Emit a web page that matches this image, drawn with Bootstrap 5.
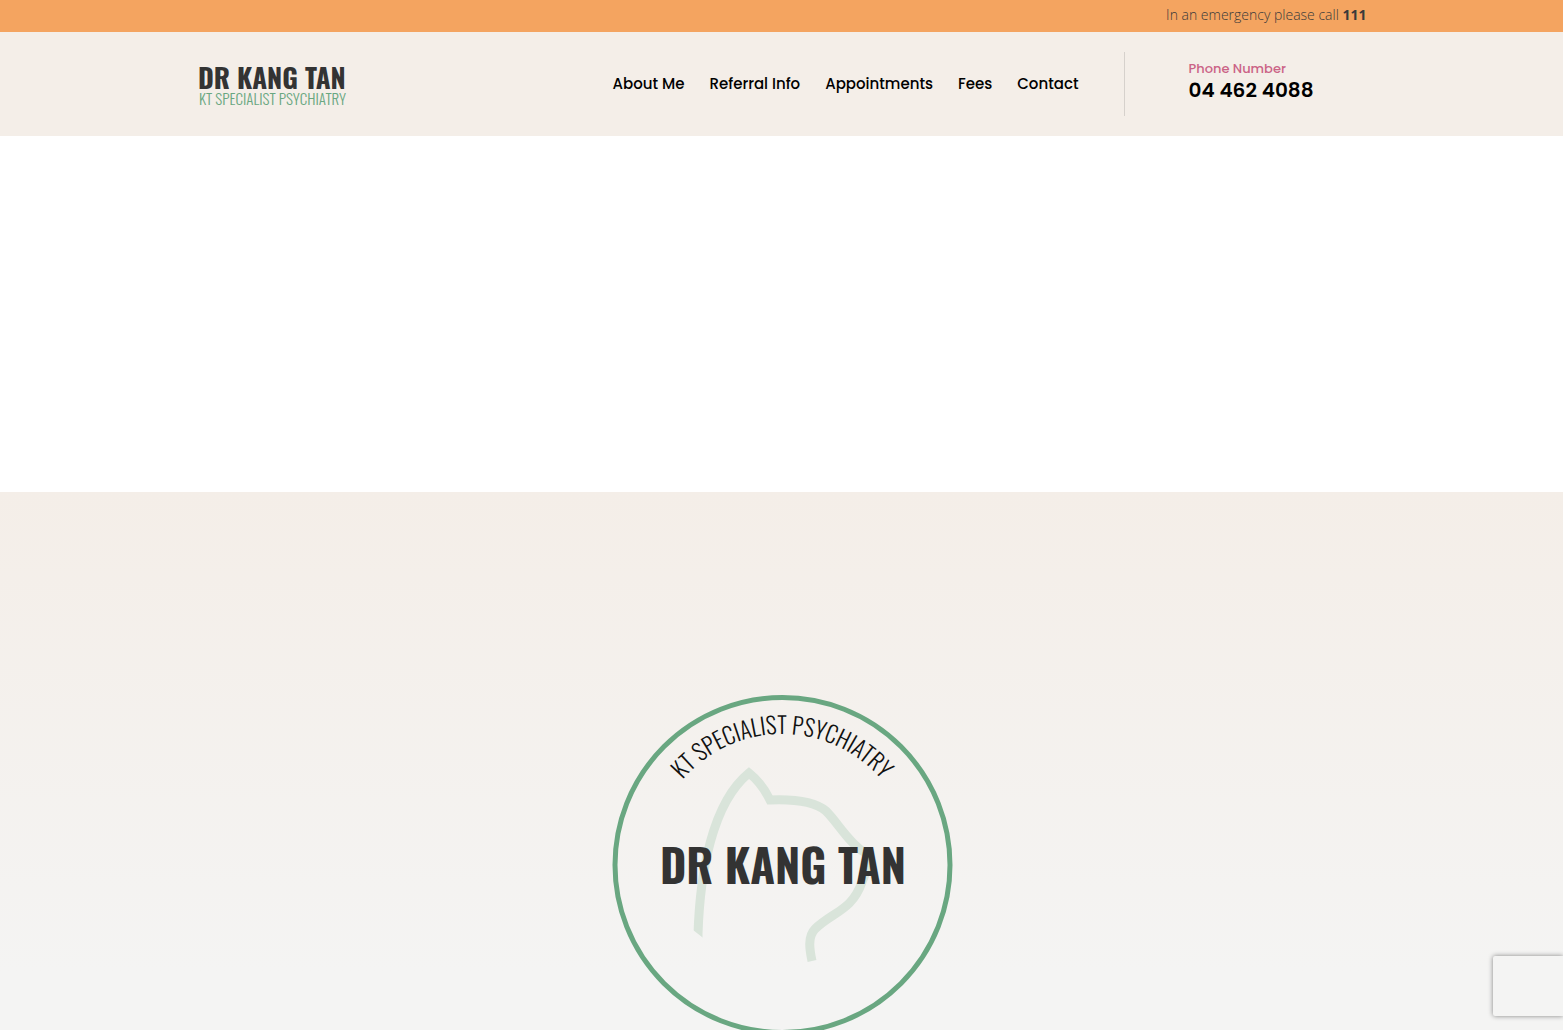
<!DOCTYPE html>
<html lang="en">
<head>
<meta charset="utf-8">
<meta name="viewport" content="width=device-width, initial-scale=1">
<title>Dr Kang Tan | KT Specialist Psychiatry</title>
<link href="https://cdn.jsdelivr.net/npm/bootstrap@5.3.0/dist/css/bootstrap.min.css" rel="stylesheet">
<style>
  body { font-family: "Open Sans", "Noto Sans", sans-serif; color: #3a3a3a; }
  .site-width { max-width: 1170px; }
  .alert-strip { background: #f4a460; height: 32px; font-size: 14px; line-height: 30px; font-weight: 300; }
  .site-header { background: #f4eee8; padding: 20px 0; font-family: Poppins, Inter, "Open Sans", sans-serif; }
  .main-nav { gap: 25px; font-size: 15px; font-weight: 500; padding-right: 45px; }
  .main-nav .nav-link { padding: 0; color: #000; line-height: 24px; }
  .phone-box { border-left: 1px solid #d6d1cc; width: 243px; min-height: 64px; padding-left: 64px; padding-top: 6px; }
  .phone-label { color: #cb6386; font-size: 13px; line-height: 22px; font-weight: 500; }
  .phone-link { color: #000; font-size: 20px; line-height: 20px; font-weight: 600; }
  .intro-space { height: 356px; }
  .hero { background: linear-gradient(#f4eee8, #f4f4f3 480px); padding-top: 200px; }
  .emblem { width: 346px; height: 346px; }
  .logo-face { font-family: Oswald, "Roboto Condensed", Roboto, sans-serif; }
  .captcha-tab { right: 0; bottom: 14px; width: 70px; height: 60px; background: #f4f4f3; border-radius: 2px 0 0 2px; box-shadow: 0 0 5px #808080; }
</style>
<script src="https://cdn.jsdelivr.net/npm/bootstrap@5.3.0/dist/js/bootstrap.bundle.min.js"></script>
</head>
<body>
<div class="vh-100 overflow-hidden d-flex flex-column">
  <div class="alert-strip flex-shrink-0">
    <div class="container-fluid site-width p-0 text-end">In an emergency please call <strong class="fw-bold">111</strong></div>
  </div>
  <header class="site-header flex-shrink-0">
    <div class="container-fluid site-width p-0 d-flex align-items-center">
      <a href="#" aria-label="Dr Kang Tan home" class="me-auto">
        <svg class="d-block logo-face" width="160" height="64" viewBox="0 0 160 64">
          <text x="1" y="37" font-size="27" font-weight="700" fill="#333">DR KANG TAN</text>
          <text x="2" y="53" font-size="15" font-weight="300" fill="#69a781">KT SPECIALIST PSYCHIATRY</text>
        </svg>
      </a>
      <nav class="nav main-nav" aria-label="Main">
        <a class="nav-link" href="#">About Me</a>
        <a class="nav-link" href="#">Referral Info</a>
        <a class="nav-link" href="#">Appointments</a>
        <a class="nav-link" href="#">Fees</a>
        <a class="nav-link" href="#">Contact</a>
      </nav>
      <div class="phone-box d-flex flex-column">
        <span class="phone-label">Phone Number</span>
        <a class="phone-link text-decoration-none" href="tel:044624088">04 462 4088</a>
      </div>
    </div>
  </header>
  <div class="intro-space flex-shrink-0"></div>
  <main class="hero flex-fill d-flex justify-content-center">
    <svg class="emblem flex-shrink-0 logo-face" viewBox="0 0 346 346" role="img" aria-label="Dr Kang Tan, KT Specialist Psychiatry">
      <defs>
        <path id="arc" d="M42 173A131 131 0 0 1 304 173"/>
        <clipPath id="outline-clip"><path d="M60 60H300V300H160L93 245L84 238H60Z"/></clipPath>
      </defs>
      <circle cx="173.500" cy="173" r="167.500" fill="none" stroke="#69a781" stroke-width="5"/>
      <path clip-path="url(#outline-clip)" d="M89 250V242C91 181 103 111 140 81C149 88 156 98 161 108C185 107 205 109 217 119C229 131 240 151 255 160C263 163 257 181 253 190C243 219 223 220 206 237C198 245 201 259 203 269" fill="none" stroke="#d9e4da" stroke-width="9"/>
      <text font-size="23" font-weight="300" fill="#111" text-anchor="middle"><textPath href="#arc" startOffset="50%">KT SPECIALIST PSYCHIATRY</textPath></text>
      <text x="174" y="192" font-size="45" font-weight="700" fill="#333" text-anchor="middle">DR KANG TAN</text>
    </svg>
  </main>
</div>
<div class="captcha-tab position-fixed"></div>
</body>
</html>
